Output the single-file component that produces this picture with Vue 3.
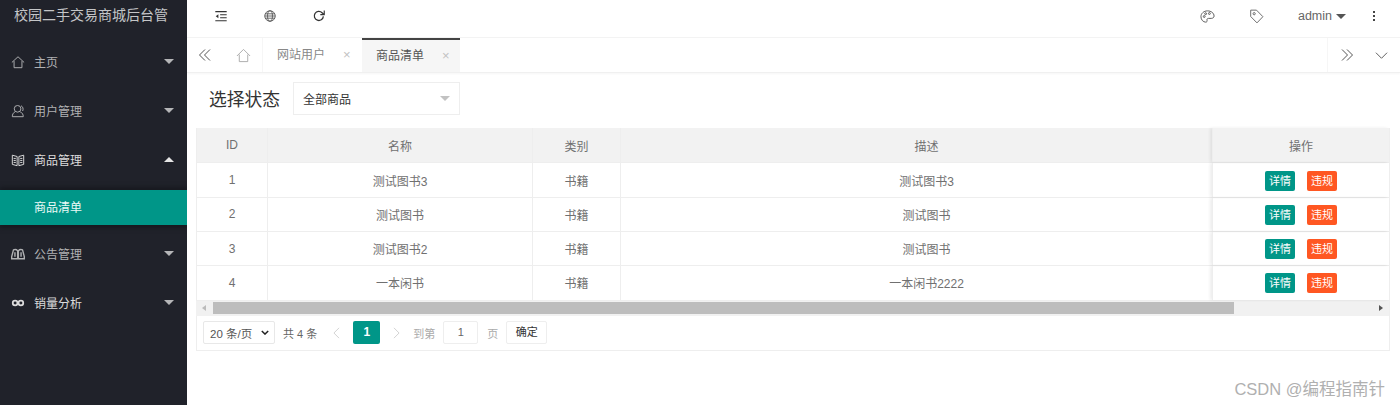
<script setup>
const menu = [
  { name: '主页', icon: 'home', open: false },
  { name: '用户管理', icon: 'user', open: false },
  { name: '商品管理', icon: 'book', open: true, bright: true, sub: '商品清单' },
  { name: '公告管理', icon: 'read', open: false },
  { name: '销量分析', icon: 'loop', open: false, bright: true },
];
const rows = [
  { id: 1, name: '测试图书3', cat: '书籍', desc: '测试图书3' },
  { id: 2, name: '测试图书', cat: '书籍', desc: '测试图书' },
  { id: 3, name: '测试图书2', cat: '书籍', desc: '测试图书' },
  { id: 4, name: '一本闲书', cat: '书籍', desc: '一本闲书2222' },
];
</script>

<template>
  <div class="page">
    <aside class="side">
      <div class="logo">校园二手交易商城后台管</div>
      <nav class="menu">
        <template v-for="m in menu" :key="m.name">
          <div class="item" :class="{ bright: m.bright }">
            <svg class="mi" viewBox="0 0 16 16" fill="none" stroke="currentColor" stroke-width="1.100">
              <path v-if="m.icon === 'home'" d="M1 8.500 8 2l7 6.500M3.500 7v7.500h9V7" />
              <g v-else-if="m.icon === 'user'">
                <circle cx="7.500" cy="5.500" r="3.800" />
                <path d="M4.500 9C2.500 10 1.500 12 1.500 14.500h12.500c0-2.500-1-4.500-3.500-5.500M11.500 2c2 1 3 3.500 1.800 6" />
              </g>
              <g v-else-if="m.icon === 'book'">
                <path d="M1.500 2.500 7 4v10.500L1.500 13zM9 4l5.500-1.500V13L9 14.500z" />
                <path d="M10.500 6.200h2.500M10.500 8.500h2.500M10.500 10.800h2.500M3 6.200h2.500M3 8.500h2.500M3 10.800h2.500" />
              </g>
              <g v-else-if="m.icon === 'read'" stroke-width="1.600">
                <path d="M7.600 4.200C6.200 2.800 4 2.800 2.800 3.300L.8 11v2.500h6.800zM8.400 4.200C9.800 2.800 12 2.800 13.200 3.300l2 7.700v2.500H8.400z" />
                <path d="M4.500 6v5M11.500 6v5" />
              </g>
              <g v-else stroke-width="2">
                <circle cx="4.700" cy="8" r="2.700" />
                <circle cx="11.300" cy="8" r="2.700" />
              </g>
            </svg>
            <span class="mt">{{ m.name }}</span>
            <i class="caret" :class="{ up: m.open }"></i>
          </div>
          <div v-if="m.sub" class="subitem"><span>{{ m.sub }}</span></div>
        </template>
      </nav>
    </aside>

    <main class="main">
      <header class="head">
        <div class="hleft">
          <svg class="hi" viewBox="0 0 16 16" fill="none" stroke="#333" stroke-width="1.200">
            <path d="M1.500 3h13M7 6.500h7.500M7 10h7.500M1.500 13.500h13" />
            <path d="M5 6 2 8.200 5 10.500z" fill="#333" stroke="none" />
          </svg>
          <svg class="hi" viewBox="0 0 16 16" fill="none" stroke="#555" stroke-width="1">
            <circle cx="8" cy="8" r="6" />
            <ellipse cx="8" cy="8" rx="2.800" ry="6" />
            <path d="M2.500 5.500h11M2 8h12M2.500 10.500h11" />
          </svg>
          <svg class="hi" viewBox="0 0 16 16" fill="none" stroke="#333" stroke-width="1.500">
            <path d="M13 8.500A5.200 5.200 0 1 1 11.500 4.200L13.500 6" />
            <path d="M14 1.800v4.700H9.500" stroke-width="1.300" />
          </svg>
        </div>
        <div class="hright">
          <svg class="hi2" viewBox="0 0 16 16" fill="none" stroke="#555" stroke-width="1">
            <path d="M8 2C4 2 1 4.800 1 8.200 1 11.500 3.500 14 6 14c1.500 0 1.800-1 1.500-2-.4-1.300.5-2 1.700-2H12c1.800 0 3-1 3-2.500C15 4.500 12 2 8 2z" />
            <circle cx="4.500" cy="8" r="1" />
            <circle cx="6" cy="5" r="1" />
            <circle cx="10" cy="4.800" r="1" />
          </svg>
          <svg class="hi2 tag" viewBox="0 0 16 16" fill="none" stroke="#666" stroke-width="1">
            <path d="M1.800 1.200 8 1.200l6.800 7-6.300 6.600-6.700-6.800z" />
            <circle cx="5.500" cy="5" r="1.200" />
          </svg>
          <span class="admin">admin</span><i class="acaret"></i>
          <span class="dots"><b></b><b></b><b></b></span>
        </div>
      </header>

      <div class="tabs">
        <div class="tb first">
          <svg viewBox="0 0 14 14" fill="none" stroke="#555" stroke-width="1"><path d="M7 1.500 1.500 7 7 12.500M12 1.500 6.500 7l5.500 5.500" /></svg>
        </div>
        <div class="tb homet">
          <svg viewBox="0 0 16 16" fill="none" stroke="#aaa" stroke-width="1"><path d="M1 8.500 8 1.500l7 7M3.500 7v7.500h9V7" /></svg>
        </div>
        <div class="tab">网站用户<span class="x">×</span></div>
        <div class="tab active">商品清单<span class="x">×</span></div>
        <div class="grow"></div>
        <div class="tb last">
          <svg viewBox="0 0 14 14" fill="none" stroke="#555" stroke-width="1"><path d="M7 1.500 12.500 7 7 12.500M2 1.500 7.500 7 2 12.500" /></svg>
        </div>
        <div class="tb chev">
          <svg viewBox="0 0 14 14" fill="none" stroke="#555" stroke-width="1"><path d="M1 4l6 6 6-6" /></svg>
        </div>
      </div>

      <div class="body">
        <div class="filter">
          <label class="flabel">选择状态</label>
          <div class="select"><span>全部商品</span><i class="scaret"></i></div>
        </div>

        <section class="table">
          <div class="row hrow">
            <div class="c c1">ID</div>
            <div class="c c2">名称</div>
            <div class="c c3">类别</div>
            <div class="c c4">描述</div>
            <div class="c c5">操作</div>
          </div>
          <div v-for="r in rows" :key="r.id" class="row">
            <div class="c c1">{{ r.id }}</div>
            <div class="c c2">{{ r.name }}</div>
            <div class="c c3">{{ r.cat }}</div>
            <div class="c c4">{{ r.desc }}</div>
            <div class="c c5">
              <span class="btn green">详情</span><span class="btn orange">违规</span>
            </div>
          </div>
          <div class="scroll">
            <i class="al"></i>
            <div class="thumb"></div>
            <i class="ar"></i>
          </div>
          <div class="pager">
            <div class="limit">20 条/页<svg viewBox="0 0 10 6" fill="none" stroke="#222" stroke-width="1.800"><path d="M1 1l4 4 4-4" /></svg></div>
            <span class="total">共 4 条</span>
            <svg class="pa" viewBox="0 0 8 14" fill="none" stroke="#ccc" stroke-width="1"><path d="M7 1 1 7l6 6" /></svg>
            <span class="cur">1</span>
            <svg class="pa" viewBox="0 0 8 14" fill="none" stroke="#ccc" stroke-width="1"><path d="M1 1l6 6-6 6" /></svg>
            <span class="to">到第</span>
            <span class="inp">1</span>
            <span class="ye">页</span>
            <span class="ok">确定</span>
          </div>
        </section>
      </div>
    </main>
    <div class="mark">CSDN @编程指南针</div>
  </div>
</template>

<style>
html, body { margin: 0; background: #fff; }
</style>

<style scoped>
.page {
  position: relative;
  display: flex;
  width: 1400px;
  height: 405px;
  overflow: hidden;
  font-family: "Liberation Sans", "Noto Sans CJK SC", sans-serif;
  font-size: 12px;
  color: #666;
  background: #fff;
}
.side { width: 187px; flex: none; background: #20222a; color: #c2c2c2; overflow: hidden; }
.logo { height: 38px; line-height: 31px; padding-left: 14px; font-size: 14px; color: #c4c6c8; white-space: nowrap; overflow: hidden; }
.item {
  height: 49px;
  box-sizing: border-box;
  padding: 0 0 2px 11px;
  display: flex;
  align-items: center;
  color: #b0b1b3;
}
.item.bright { color: #dcdcdc; }
.mi { width: 14px; height: 14px; margin-right: 9px; flex: none; }
.mt { flex: 1; font-size: 12px; }
.caret {
  width: 0; height: 0;
  margin-right: 13px;
  border-left: 5px solid transparent;
  border-right: 5px solid transparent;
  border-top: 5px solid #b5b6b8;
}
.caret.up { border-top: 0; border-bottom: 5px solid #e6e6e6; }
.subitem {
  height: 35px;
  line-height: 36px;
  padding-left: 34px;
  margin: 5px 0;
  background: #009688;
  color: #eafaf7;
  box-shadow: 0 -3px 4px #181a20, 0 3px 4px #181a20;
}
.main { flex: 1; min-width: 0; }
.head {
  height: 38px;
  box-sizing: border-box;
  display: flex;
  justify-content: space-between;
  align-items: flex-start;
  border-bottom: 1px solid #f3f3f3;
}
.hleft { display: flex; gap: 35px; padding: 9px 0 0 27px; }
.hi { width: 14px; height: 14px; display: block; }
.hright { display: flex; align-items: center; padding: 9px 25px 0 0; height: 14px; color: #555; }
.hi2 { width: 15px; height: 15px; margin-right: 34px; flex: none; }
.admin { font-size: 12.500px; margin-right: 4px; color: #666; }
.acaret { width: 0; height: 0; border-left: 5px solid transparent; border-right: 5px solid transparent; border-top: 5px solid #555; margin-right: 27px; }
.dots { display: flex; flex-direction: column; gap: 2px; }
.dots b { width: 2px; height: 2px; background: #444; display: block; }

.tabs {
  height: 35px;
  box-sizing: border-box;
  display: flex;
  border-bottom: 1px solid #f0f0f0;
  box-shadow: 0 1px 2px rgba(0, 0, 0, .04);
  align-items: stretch;
}
.tb { display: flex; align-items: center; justify-content: center; border-right: 1px solid #f6f6f6; box-sizing: border-box; }
.tb svg { width: 14px; height: 14px; }
.first { width: 36px; border-right: 0; padding-right: 1px; }
.homet { width: 40px; padding-left: 2px; }
.homet svg { width: 15px; height: 15px; }
.tab {
  width: 99px;
  box-sizing: border-box;
  padding-left: 14px;
  line-height: 34px;
  font-size: 12px;
  color: #888;
  position: relative;
  white-space: nowrap;
}
.tab.active { background: #f6f6f6; color: #555; border-top: 2px solid #444; line-height: 32px; width: 98px; }
.x { position: absolute; left: 80px; top: 0; color: #c2c2c2; font-size: 13px; }
.grow { flex: 1; }
.last { width: 37px; border-left: 1px solid #f6f6f6; border-right: 0; padding-left: 2px; }
.chev { width: 36px; border-right: 0; padding-left: 1px; padding-right: 2px; }
.chev svg { width: 13px; height: 13px; }

.body { padding: 9px 10px 0 9px; }
.filter { display: flex; align-items: center; height: 33px; }
.flabel { width: 97px; box-sizing: border-box; padding: 0 0 2px 13px; font-size: 17.800px; color: #333; white-space: nowrap; }
.select {
  width: 167px; height: 33px; box-sizing: border-box;
  border: 1px solid #eee;
  display: flex; align-items: center; justify-content: space-between;
  padding: 0 8px 0 9px;
  font-size: 12px; color: #333;
}
.scaret { width: 0; height: 0; border-left: 5px solid transparent; border-right: 5px solid transparent; border-top: 5px solid #c2c2c2; margin-right: 1px; }

.table { margin-top: 13px; width: 1194px; border-right: 1px solid #eee; border-bottom: 1px solid #eee; box-sizing: border-box; }
.row { display: flex; height: 34.300px; box-sizing: border-box; border-bottom: 1px solid #eee; }
.hrow { height: 35.400px; background: #f2f2f2; }
.c { display: flex; align-items: center; justify-content: center; box-sizing: border-box; border-left: 1px solid #eee; color: #707070; font-size: 12px; }
.c1 { width: 71px; }
.c2 { width: 265px; }
.c3 { width: 88px; }
.c4 { width: 592px; padding-left: 20px; }
.c5 { flex: 1; gap: 12px; box-shadow: -2px 0 3px rgba(0, 0, 0, .07); }
.btn { width: 30px; height: 20px; line-height: 20px; margin-top: 1px; border-radius: 2px; color: #fff; text-align: center; font-size: 11px; }
.green { background: #009688; }
.orange { background: #ff5722; }

.scroll { height: 15px; background: #f1f1f1; display: flex; align-items: center; }
.al { width: 0; height: 0; border-top: 3px solid transparent; border-bottom: 3px solid transparent; border-right: 4px solid #bbb; margin: 0 7px 0 6px; }
.thumb { width: 1021px; height: 12px; background: #bdbdbd; }
.ar { width: 0; height: 0; border-top: 3px solid transparent; border-bottom: 3px solid transparent; border-left: 4px solid #555; margin-left: auto; margin-right: 6px; }

.pager { height: 34px; display: flex; align-items: center; padding-left: 6px; border-left: 1px solid #eee; box-sizing: border-box; font-size: 11px; color: #666; }
.limit { width: 72px; height: 23px; box-sizing: border-box; border: 1px solid #e8e8e8; border-radius: 2px; display: flex; align-items: center; justify-content: space-between; padding: 0 5px 0 6px; color: #555; font-size: 11.500px; }
.limit svg { width: 8px; height: 5px; }
.total { margin: 0 16px 0 8px; color: #666; }
.pa { width: 7px; height: 12px; flex: none; }
.cur { width: 27px; height: 23px; margin: 0 13px; background: #009688; color: #fff; text-align: center; line-height: 23px; border-radius: 2px; font-weight: 700; font-size: 12px; }
.to { margin-left: 13px; color: #aaa; }
.inp { width: 35px; height: 23px; margin: 0 9px 0 8px; box-sizing: border-box; border: 1px solid #eee; border-radius: 2px; text-align: center; line-height: 21px; color: #666; }
.ye { color: #aaa; }
.ok { width: 41px; height: 23px; margin-left: 8px; box-sizing: border-box; border: 1px solid #eee; border-radius: 2px; text-align: center; line-height: 21px; font-size: 11px; color: #333; }
.mark { position: absolute; right: 15px; top: 378px; font-size: 16.500px; line-height: 22px; color: #b0b0b0; white-space: nowrap; }
</style>
